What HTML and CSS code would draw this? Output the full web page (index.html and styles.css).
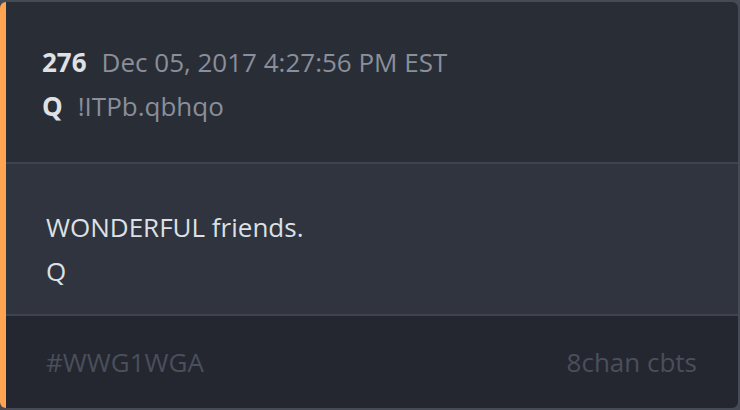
FILE: index.html
```html
<!DOCTYPE html>
<html>
<head>
<meta charset="utf-8">
<link rel="stylesheet" href="styles.css">
</head>
<body>
<div class="card">
  <div class="head">
    <div class="line"><span class="num">276</span><span class="meta">Dec 05, 2017 4:27:56 PM EST</span></div>
    <div class="line"><span class="num">Q</span><span class="meta">!ITPb.qbhqo</span></div>
  </div>
  <div class="body">
    <div class="line">WONDERFUL friends.</div>
    <div class="line">Q</div>
  </div>
  <div class="foot">
    <span>#WWG1WGA</span>
    <span>8chan cbts</span>
  </div>
</div>
</body>
</html>
```
FILE: styles.css
```css
html, body {
  margin: 0;
  padding: 0;
  background: #454a55;
  width: 740px;
  height: 410px;
  overflow: hidden;
  font-family: "Open Sans", sans-serif;
}
.card {
  box-sizing: border-box;
  margin: 2px 2px 2px 0;
  height: 406px;
  width: 738px;
  border-left: 6px solid #ffa450;
  border-radius: 6px;
  overflow: hidden;
  display: flex;
  flex-direction: column;
}
.head {
  background: #292d36;
  height: 162px;
  box-sizing: border-box;
  padding: 38px 40px 0 36px;
  border-bottom: 2px solid #3e434d;
}
.line {
  font-size: 26px;
  line-height: 44px;
  height: 44px;
  white-space: nowrap;
}
.num {
  color: #dfe1e5;
  font-weight: 700;
  margin-right: 15px;
}
.meta {
  color: #8a8f9b;
}
.body {
  background: #2f343e;
  height: 152px;
  box-sizing: border-box;
  padding: 41px 40px 0 40px;
  color: #dde0e4;
  border-bottom: 2px solid #3e434d;
}
.foot {
  flex: 1;
  background: #242730;
  display: flex;
  justify-content: space-between;
  padding: 0 41px 0 40px;
  align-items: center;
  font-size: 26px;
  color: #4a4f5b;
}
```
